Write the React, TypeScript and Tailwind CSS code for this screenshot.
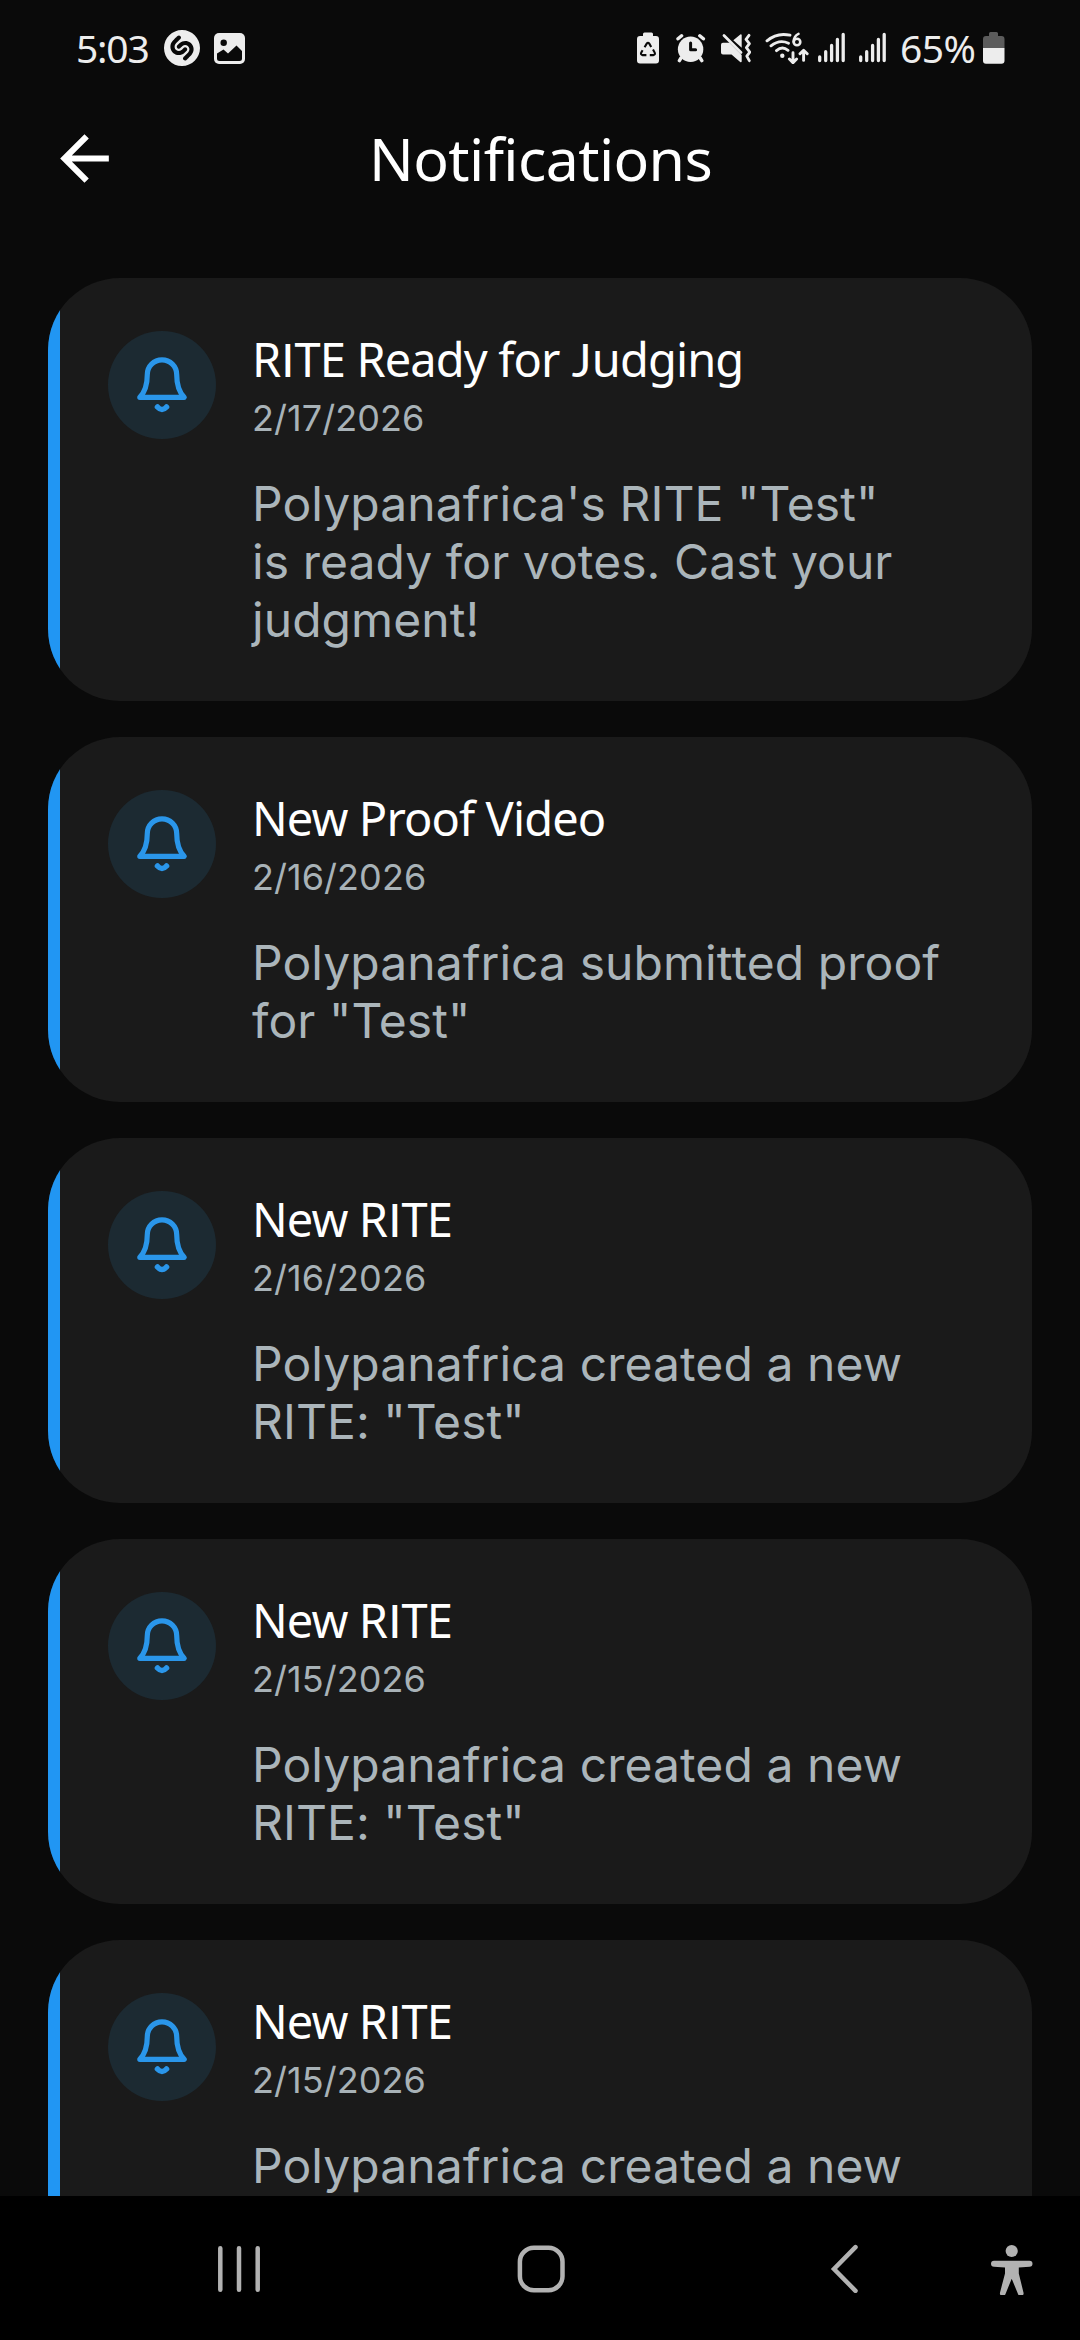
import React from 'react';
import { SiShazam } from 'react-icons/si';
import { MdArrowBack } from 'react-icons/md';

interface Notification {
  id: number;
  title: string;
  date: string;
  lines: string[];
}

const notifications: Notification[] = [
  {
    id: 1,
    title: 'RITE Ready for Judging',
    date: '2/17/2026',
    lines: ['Polypanafrica\'s RITE "Test"', 'is ready for votes. Cast your', 'judgment!'],
  },
  {
    id: 2,
    title: 'New Proof Video',
    date: '2/16/2026',
    lines: ['Polypanafrica submitted proof', 'for "Test"'],
  },
  {
    id: 3,
    title: 'New RITE',
    date: '2/16/2026',
    lines: ['Polypanafrica created a new', 'RITE: "Test"'],
  },
  {
    id: 4,
    title: 'New RITE',
    date: '2/15/2026',
    lines: ['Polypanafrica created a new', 'RITE: "Test"'],
  },
  {
    id: 5,
    title: 'New RITE',
    date: '2/15/2026',
    lines: ['Polypanafrica created a new'],
  },
];

function SignalBars({ className }: { className?: string }) {
  return (
    <svg className={className} width="27" height="32" viewBox="0 0 27 32" stroke="currentColor" strokeWidth="3.3" strokeLinecap="round">
      <path d="M1.7 25v3.6M7.7 19.7v8.9M13.6 13.4v15.2M19.4 7.4v21.2M25.2 2.4v26.2" />
    </svg>
  );
}

function StatusBar() {
  return (
    <div className="flex h-24 items-center pl-[76px] pr-[75px] text-[#ededed] shrink-0">
      <span className="w-[88px] text-[39px] leading-[48px] tracking-[-1.2px] whitespace-nowrap">5:03</span>
      <SiShazam className="h-9 w-9" />
      {/* Picture */}
      <svg className="ml-[14px]" width="31" height="32" viewBox="0 0 31 32">
        <rect y="1" width="31" height="31" rx="5" fill="currentColor" />
        <circle cx="9.7" cy="10.7" r="3.2" fill="#0a0a0a" />
        <path d="M3 21.500 9.500 17.500 14 21.500 22.500 13.500 28 19v7.500a2.500 2.500 0 0 1-2.500 2.500h-20A2.500 2.500 0 0 1 3 26.500z" fill="#0a0a0a" />
      </svg>

      <div className="ml-auto flex items-center">
        {/* Battery protection */}
        <svg width="22" height="32" viewBox="0 0 22 32">
          <path d="M7.5.5h7A1.5 1.5 0 0 1 16 2v2h3a3 3 0 0 1 3 3v21.500a3 3 0 0 1-3 3H3a3 3 0 0 1-3-3V7a3 3 0 0 1 3-3h3V2A1.5 1.5 0 0 1 7.5.5z" fill="currentColor" />
          <path d="M7.600 15.200 9.700 11.700q1.300-1.700 2.600 0l1.900 3.300M16 17.600l1.700 3q.9 2.200-1.400 2.500h-3.500M9.400 23.100H5.600q-2.200-.4-1.400-2.500l1.400-2.400" fill="none" stroke="#0a0a0a" strokeWidth="2.1" />
        </svg>
        {/* Alarm */}
        <svg className="ml-[17px]" width="30" height="32" viewBox="0 0 30 32" strokeLinecap="round">
          <circle cx="14.6" cy="17.3" r="12.7" fill="currentColor" />
          <path d="M2 6.800 5.600 3.800M27.400 6.800 23.800 3.800M5 26l-1.600 2.600M24.200 26l1.600 2.600" stroke="currentColor" strokeWidth="3.4" />
          <path d="M14.600 11v6.800h5" fill="none" stroke="#0a0a0a" strokeWidth="3" strokeLinejoin="round" />
        </svg>
        {/* Vibrate */}
        <svg className="ml-[15px]" width="30" height="32" viewBox="0 0 30 32">
          <path d="M2 10.800h6.500L20.700 23v6.500q-.4 1.200-1.500.4L10.500 22.500H2a2 2 0 0 1-2-2v-7.700a2 2 0 0 1 2-2zM12.300 8.200l7-5.800q1.200-.5 1.400.7v12.700z" fill="currentColor" />
          <path d="M3 3.500 20 20.500" stroke="currentColor" strokeWidth="2.8" strokeLinecap="round" />
          <path d="m28 3.300-3 4 3.400 4.400-3 4 3.400 4.400-3 4 2.500 4.600" fill="none" stroke="currentColor" strokeWidth="2.8" strokeLinecap="round" strokeLinejoin="round" />
        </svg>
        {/* Wi-Fi 6 with traffic arrows */}
        <svg className="ml-[14px]" width="44" height="32" viewBox="0 0 44 32" fill="none" stroke="currentColor" strokeWidth="2.9" strokeLinecap="round" strokeLinejoin="round">
          <path d="M2 8.800Q12 .2 25 3.200M6 13.800Q14.500 7 23.500 11.200M11.500 18.600Q17.300 13.700 23 18.300" />
          <circle cx="17.3" cy="23.7" r="2.2" fill="currentColor" stroke="none" />
          <path d="M33.500 1.900Q28.900 3.800 28.700 9.800" strokeWidth="2.6" />
          <circle cx="32" cy="10" r="3.3" strokeWidth="2.6" />
          <path d="M28 20.800v9.500M24.400 27l3.600 3.600 3.600-3.600M38.600 28.400v-10M35 21.800l3.600-3.600 3.600 3.600" />
        </svg>
        <SignalBars className="ml-[9px]" />
        <SignalBars className="ml-[14px]" />
        <span className="ml-[14px] w-[77px] text-[39px] leading-[48px] tracking-[-0.6px] whitespace-nowrap">65%</span>
        <svg className="ml-[6px]" width="22" height="32" viewBox="0 0 22 32">
          <path d="M7.5 0h6A1.5 1.5 0 0 1 15 1.500V4h3.500a3 3 0 0 1 3 3v9H0V7a3 3 0 0 1 3-3h3V1.500A1.500 1.500 0 0 1 7.500 0z" fill="#5c5c5c" />
          <path d="M0 16h21.500v12.700a3 3 0 0 1-3 3H3a3 3 0 0 1-3-3z" fill="currentColor" />
        </svg>
      </div>
    </div>
  );
}

function BellBadge() {
  return (
    <div className="h-[108px] w-[108px] shrink-0 rounded-full bg-[#1c2a32] text-[#2a96ea]">
      <svg width="108" height="108" viewBox="0 0 108 108" fill="none" stroke="currentColor" strokeWidth="5.2" strokeLinecap="round" strokeLinejoin="round">
        <path d="M31.800 66.300C37 61 39.300 53 39.300 43.500a14.700 14.700 0 0 1 29.400 0c0 9.500 2.300 17.500 7.500 22.800z" />
        <path d="M49.500 76q4.500 5 9 0" strokeWidth="5.6" />
      </svg>
    </div>
  );
}

// The title face has a plain capital I and a J that sits on the baseline
function Title({ text }: { text: string }) {
  return (
    <h2 className="text-[47px] leading-[56px] tracking-[-0.9px] text-white whitespace-nowrap">
      {text.split(/([IJ])/).map((part, i) =>
        part === 'I' || part === 'J' ? (
          <span key={i} className="mx-px font-['Lato'] leading-[0]">{part}</span>
        ) : (
          part
        )
      )}
    </h2>
  );
}

function NotificationCard({ item }: { item: Notification }) {
  return (
    <div className="flex min-h-[365px] shrink-0 overflow-hidden rounded-[72px] bg-[#1a1a1a]">
      <div className="w-3 shrink-0 bg-[#2196f3]" />
      <div className="flex pt-[53px] pb-[52px] pl-12">
        <BellBadge />
        <div className="ml-9">
          <Title text={item.title} />
          <p className="mt-[9px] font-['Inter'] text-[36px] leading-[44px] tracking-[0.05px] text-[#a8b2b7]">{item.date}</p>
          <p className="mt-[35px] font-['Inter'] text-[48px] leading-[58px] text-[#abb5ba] tracking-[0.07px]">
            {item.lines.map((line) => (
              <span key={line} className="block whitespace-nowrap">{line}</span>
            ))}
          </p>
        </div>
      </div>
    </div>
  );
}

function NavBar() {
  return (
    <div className="flex h-36 shrink-0 items-center bg-black text-[#b2b2b2]">
      <svg className="ml-[218px]" width="42" height="50" viewBox="0 0 42 50" stroke="currentColor" strokeWidth="4.5" strokeLinecap="round">
        <path d="M2.300 5.200v41.600M21 5.200v41.600M39.700 5.200v41.600" />
      </svg>
      <svg className="ml-[257px]" width="48" height="50" viewBox="0 0 48 50" fill="none" stroke="currentColor" strokeWidth="4.5">
        <rect x="2.9" y="4.7" width="42.6" height="42.6" rx="14" />
      </svg>
      <svg className="ml-[265px]" width="30" height="50" viewBox="0 0 30 50" fill="none" stroke="currentColor" strokeWidth="4.5" strokeLinecap="round">
        <path d="M25.500 4.200 4 26l21.500 21.800" />
      </svg>
      <svg className="ml-[130px]" width="44" height="54" viewBox="0 0 44 54">
        <circle cx="21.7" cy="10" r="6.1" fill="currentColor" />
        <path d="M4 19.700h35.500a3 3 0 0 1 0 6l-10.700.8v6l4.600 18.700a2.800 2.800 0 0 1-5.400 1.700L21.700 37.700 15.500 52.900a2.800 2.800 0 0 1-5.400-1.700L15 32.500v-6L4 25.700a3 3 0 0 1 0-6z" fill="currentColor" />
      </svg>
    </div>
  );
}

export default function App() {
  return (
    <div className="flex h-[2340px] w-[1080px] flex-col overflow-hidden bg-[#0a0a0a] font-['Noto_Sans',sans-serif]">
      <StatusBar />

      {/* App bar */}
      <header className="flex h-[182px] shrink-0 items-start pl-12 pt-[22px]">
        <MdArrowBack className="mt-[4px] h-[73px] w-[73px] text-white" />
        <h1 className="ml-[248px] text-[59px] leading-[80px] tracking-[-0.6px] text-white">Notifications</h1>
      </header>

      {/* List */}
      <main className="flex flex-1 flex-col gap-9 overflow-hidden px-12 min-h-0">
        {notifications.map((item) => (
          <NotificationCard key={item.id} item={item} />
        ))}
      </main>

      <NavBar />
    </div>
  );
}
